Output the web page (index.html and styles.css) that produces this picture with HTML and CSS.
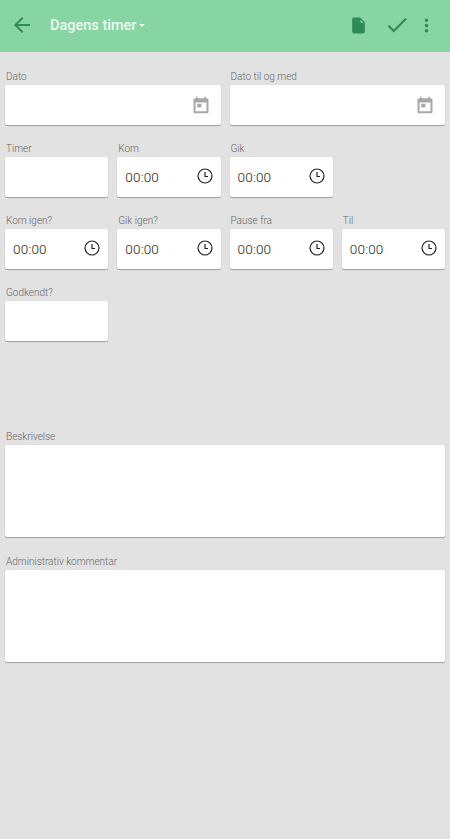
FILE: index.html
```html
<!DOCTYPE html>
<html lang="da">
<head>
    <meta charset="UTF-8">
    <meta name="viewport" content="width=device-width, initial-scale=1.0">
    <title>Dagens timer</title>
    <link rel="stylesheet" href="styles.css">
</head>

<body>
    <header class="topbar">
        <svg class="back-icon" viewBox="0 0 24 24"><path d="M20 11H7.8l5.6-5.6L12 4l-8 8 8 8 1.4-1.4L7.8 13H20z"/></svg>
        <div class="title">Dagens timer<span class="caret"></span></div>
        <div class="actions">
            <svg class="doc-icon" viewBox="0 0 24 24"><path d="M6 2c-1.1 0-2 .9-2 2v16c0 1.1.9 2 2 2h12c1.1 0 2-.9 2-2V8l-6-6H6zm8.5 2.5v3.2c0 .4.3.8.8.8h3.2z" fill-rule="evenodd"/></svg>
            <svg class="check-icon" viewBox="0 0 24 24"><path d="M9 16.2 4.8 12l-1.4 1.4L9 19 21 7l-1.4-1.4z"/></svg>
            <svg class="more-icon" viewBox="0 0 24 24"><path d="M12 8c1.1 0 2-.9 2-2s-.9-2-2-2-2 .9-2 2 .9 2 2 2zm0 2c-1.1 0-2 .9-2 2s.9 2 2 2 2-.9 2-2-.9-2-2-2zm0 6c-1.1 0-2 .9-2 2s.9 2 2 2 2-.9 2-2-.9-2-2-2z"/></svg>
        </div>
    </header>

    <main class="form">
        <div class="grid">
            <div class="field span-2">
                <label>Dato</label>
                <div class="box">
                    <svg class="cal-icon" viewBox="0 0 24 24"><path fill-rule="evenodd" d="M5 4h1V2h2v2h8V2h2v2h1c1.1 0 2 .9 2 2v14c0 1.100-.9 2-2 2H5c-1.100 0-2-.9-2-2V6c0-1.100.9-2 2-2zm.5 5v10.500h13V9zM7.500 10.500h5v4.500h-5z"/></svg>
                </div>
            </div>
            <div class="field span-2">
                <label>Dato til og med</label>
                <div class="box">
                    <svg class="cal-icon" viewBox="0 0 24 24"><path fill-rule="evenodd" d="M5 4h1V2h2v2h8V2h2v2h1c1.1 0 2 .9 2 2v14c0 1.100-.9 2-2 2H5c-1.100 0-2-.9-2-2V6c0-1.100.9-2 2-2zm.5 5v10.500h13V9zM7.500 10.500h5v4.500h-5z"/></svg>
                </div>
            </div>

            <div class="field">
                <label>Timer</label>
                <div class="box"></div>
            </div>
            <div class="field">
                <label>Kom</label>
                <div class="box"><span class="time">00:00</span><svg class="clock-icon" viewBox="0 0 16 16"><circle cx="8" cy="8" r="7"/><path d="M8 4v4.500h3"/></svg></div>
            </div>
            <div class="field">
                <label>Gik</label>
                <div class="box"><span class="time">00:00</span><svg class="clock-icon" viewBox="0 0 16 16"><circle cx="8" cy="8" r="7"/><path d="M8 4v4.500h3"/></svg></div>
            </div>
            <div class="field"></div>

            <div class="field">
                <label>Kom igen?</label>
                <div class="box"><span class="time">00:00</span><svg class="clock-icon" viewBox="0 0 16 16"><circle cx="8" cy="8" r="7"/><path d="M8 4v4.500h3"/></svg></div>
            </div>
            <div class="field">
                <label>Gik igen?</label>
                <div class="box"><span class="time">00:00</span><svg class="clock-icon" viewBox="0 0 16 16"><circle cx="8" cy="8" r="7"/><path d="M8 4v4.500h3"/></svg></div>
            </div>
            <div class="field">
                <label>Pause fra</label>
                <div class="box"><span class="time">00:00</span><svg class="clock-icon" viewBox="0 0 16 16"><circle cx="8" cy="8" r="7"/><path d="M8 4v4.500h3"/></svg></div>
            </div>
            <div class="field">
                <label>Til</label>
                <div class="box"><span class="time">00:00</span><svg class="clock-icon" viewBox="0 0 16 16"><circle cx="8" cy="8" r="7"/><path d="M8 4v4.500h3"/></svg></div>
            </div>

            <div class="field">
                <label>Godkendt?</label>
                <div class="box"></div>
            </div>
        </div>

        <div class="notes">
            <div class="field">
                <label>Beskrivelse</label>
                <div class="box box-large"></div>
            </div>
            <div class="field">
                <label>Administrativ kommentar</label>
                <div class="box box-large"></div>
            </div>
        </div>
    </main>
</body>
</html>
```

FILE: styles.css
```css
html, body {
    margin: 0;
    height: 100%;
}
body {
    background-color: #e2e2e2;
    font-family: Roboto, "Liberation Sans", sans-serif;
    overflow: hidden;
}

.topbar {
    display: flex;
    align-items: center;
    height: 52px;
    background-color: #86d5a2;
    padding: 0 13px 2px 10px;
    box-sizing: border-box;
}
.topbar svg {
    fill: #2e8b57;
    display: block;
}
.back-icon {
    width: 24px;
    height: 24px;
}
.title {
    margin-left: 16px;
    color: #eefaf2;
    font-size: 14.5px;
    font-weight: 500;
    display: flex;
    align-items: center;
}
.caret {
    margin-left: 3px;
    border-left: 3px solid transparent;
    border-right: 3px solid transparent;
    border-top: 3px solid #eefaf2;
}
.actions {
    margin-left: auto;
    display: flex;
    align-items: center;
}
.doc-icon {
    width: 19px;
    height: 19px;
}
.check-icon {
    width: 26px;
    height: 26px;
    margin-left: 16px;
}
.more-icon {
    width: 21px;
    height: 21px;
    margin-left: 6px;
}

.form {
    padding: 17px 5px 0;
}
.grid {
    display: grid;
    grid-template-columns: repeat(4, 1fr);
    column-gap: 9px;
    row-gap: 16px;
}
.span-2 {
    grid-column: span 2;
}
.field label {
    display: block;
    height: 16px;
    line-height: 16px;
    padding-left: 1px;
    font-size: 10px;
    font-weight: 300;
    color: #666;
}
.box {
    height: 40px;
    box-sizing: border-box;
    background-color: #fff;
    border-radius: 2px;
    box-shadow: 0 1px 1px rgba(0, 0, 0, 0.3);
    display: flex;
    align-items: center;
    padding: 0 8px;
}
.box-large {
    height: 92px;
}
.time {
    font-size: 13.5px;
    font-weight: 300;
    letter-spacing: 0.2px;
    color: #222;
    margin-top: -1px;
}
.clock-icon {
    width: 16px;
    height: 16px;
    margin-left: auto;
    margin-top: -3px;
    fill: none;
    stroke: #222;
    stroke-width: 1.2;
}
.cal-icon {
    width: 20px;
    height: 20px;
    margin-left: auto;
    margin-right: 2px;
    fill: #a9a9a9;
}
.notes {
    margin-top: 88px;
    display: flex;
    flex-direction: column;
    gap: 17px;
}
```
